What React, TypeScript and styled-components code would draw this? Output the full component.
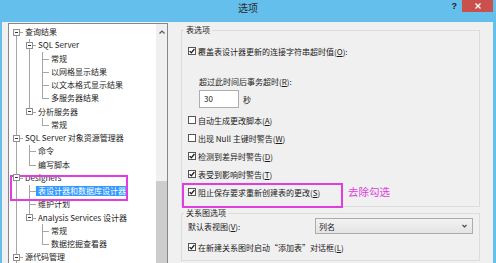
import styled, { createGlobalStyle } from 'styled-components';

const ROW = 13.25;
const TREE_LINE = '#a6a6a6';
const MAGENTA = '#e03ce0';

const GlobalStyle = createGlobalStyle`
  html, body {
    margin: 0;
    padding: 0;
    overflow: hidden;
  }
  body {
    font-family: "Noto Sans CJK SC", "Noto Sans", sans-serif;
  }
`;

const Window = styled.div`
  width: 496px;
  height: 263px;
  background: #64bfec;
  display: flex;
  flex-direction: column;
  overflow: hidden;
  font-family: "Noto Sans CJK SC", "Noto Sans", sans-serif;
  font-size: 8px;
  color: #1b1b1b;
`;

const TitleBar = styled.div`
  flex: none;
  height: 22px;
  display: grid;
  grid-template-columns: 1fr auto 1fr;
`;

const Title = styled.div`
  grid-column: 2;
  padding-top: 2px;
  font-size: 10px;
  line-height: 11px;
  color: #2b2b2b;
`;

const Controls = styled.div`
  justify-self: end;
  display: flex;
  align-items: flex-start;
  margin-right: 3px;
`;

const HelpButton = styled.div`
  font-family: "Liberation Sans", sans-serif;
  font-weight: 700;
  font-size: 9px;
  line-height: 10px;
  padding-top: 1px;
  margin-right: 5px;
  color: #202020;
`;

const CloseButton = styled.div`
  width: 31px;
  height: 12px;
  background: #c9504c;
  display: flex;
  align-items: center;
  justify-content: center;
`;

const Body = styled.div`
  flex: 1;
  min-height: 0;
  margin: 0 3px 0 2px;
  background: #f0f0f0;
  display: flex;
`;

/* left tree */
const TreePane = styled.div`
  position: relative;
  flex: none;
  width: 158px;
  margin: 1px 0 0 6px;
  border: 1px solid #828790;
  border-bottom: none;
  background: #fff;
  display: flex;
`;

const TreeContent = styled.div`
  flex: 1;
  min-width: 0;
  padding-top: 1.5px;
  overflow: hidden;
`;

const TreeList = styled.ul<{ $nested?: boolean }>`
  list-style: none;
  margin: 0;
  padding: 0 0 0 ${(p) => (p.$nested ? 13 : 0)}px;
`;

const TreeItem = styled.li<{ $first?: boolean; $last?: boolean }>`
  position: relative;
  &::before {
    content: '';
    position: absolute;
    left: 7px;
    top: ${(p) => (p.$first ? ROW / 2 : 0)}px;
    ${(p) => (p.$last ? `height: ${ROW / 2}px;` : 'bottom: 0;')}
    border-left: 1px solid ${TREE_LINE};
  }
`;

const TreeRow = styled.div`
  height: ${ROW}px;
  display: flex;
  align-items: center;
  white-space: nowrap;
`;

const Gutter = styled.span`
  position: relative;
  flex: none;
  width: 14px;
  height: 100%;
  display: flex;
  align-items: center;
  &::after {
    content: '';
    position: absolute;
    left: 7px;
    right: 0;
    top: 50%;
    border-top: 1px solid ${TREE_LINE};
  }
`;

const Expander = styled.span`
  position: relative;
  z-index: 1;
  box-sizing: border-box;
  width: 7px;
  height: 7px;
  margin-left: 4px;
  border: 1px solid #8e8f8f;
  background: #fff;
  display: flex;
  align-items: center;
  justify-content: center;
  &::before {
    content: '';
    width: 3px;
    height: 1px;
    background: #333;
  }
`;

const NodeLabel = styled.span<{ $selected?: boolean }>`
  padding: 0 2px;
  line-height: 10px;
  height: 10px;
  background: ${(p) => (p.$selected ? '#3399ff' : 'transparent')};
  color: ${(p) => (p.$selected ? '#fff' : 'inherit')};
`;

const ScrollBar = styled.div`
  flex: none;
  width: 11px;
  background: #f0f0f0;
  display: flex;
  flex-direction: column;
`;

const ScrollArrow = styled.div`
  height: 16px;
  display: flex;
  align-items: center;
  justify-content: center;
`;

const ScrollThumb = styled.div`
  flex: 1;
  margin-top: 141px;
  background: #cdcdcd;
`;

const TreeMark = styled.div`
  position: absolute;
  left: 1px;
  top: 151px;
  width: 118px;
  height: 26px;
  box-sizing: border-box;
  border: 2px solid ${MAGENTA};
  pointer-events: none;
`;

/* right options */
const OptionsPane = styled.div`
  flex: 1;
  min-width: 0;
  padding: 3px 13px 0 13px;
  display: flex;
  flex-direction: column;
`;

const Group = styled.fieldset<{ $mt?: number }>`
  margin: ${(p) => p.$mt ?? 0}px 0 0 0;
  padding: 0;
  min-width: 0;
  border: 1px solid #dcdcdc;
`;

const GroupTitle = styled.legend`
  margin-left: 2px;
  padding: 0 2px;
  font-size: 8px;
  line-height: 10px;
`;

const GroupBody = styled.div<{ $pt: number; $pb: number }>`
  display: flex;
  flex-direction: column;
  padding: ${(p) => p.$pt}px 6px ${(p) => p.$pb}px 6px;
`;

const CheckRow = styled.div<{ $mt?: number }>`
  position: relative;
  height: 18px;
  margin-top: ${(p) => p.$mt ?? 0}px;
  display: flex;
  align-items: center;
  gap: 2px;
  white-space: nowrap;
`;

const Box = styled.span`
  flex: none;
  box-sizing: border-box;
  width: 8px;
  height: 8px;
  border: 1px solid #555;
  background: #fff;
  display: flex;
  align-items: center;
  justify-content: center;
`;

const Indented = styled.div`
  margin: 12px 0 0 11px;
  display: flex;
  flex-direction: column;
`;

const FieldLabel = styled.div`
  height: 18px;
  display: flex;
  align-items: center;
  white-space: nowrap;
`;

const InputRow = styled.div`
  display: flex;
  align-items: center;
  gap: 4px;
`;

const TextBox = styled.div`
  box-sizing: border-box;
  width: 40px;
  height: 18px;
  border: 1px solid #abadb3;
  background: #fff;
  padding-left: 4px;
  line-height: 16px;
`;

const ComboRow = styled.div`
  height: 16px;
  display: flex;
  align-items: center;
  justify-content: space-between;
  white-space: nowrap;
`;

const Combo = styled.div`
  box-sizing: border-box;
  width: 158px;
  height: 16px;
  border: 1px solid #acacac;
  background: linear-gradient(#f2f2f2, #e4e4e4);
  display: flex;
  align-items: center;
  justify-content: space-between;
  padding: 0 5px 0 3px;
`;

const Frame = styled.div`
  position: absolute;
  left: -6px;
  top: 0;
  width: 161px;
  height: 25px;
  box-sizing: border-box;
  border: 2px solid ${MAGENTA};
  pointer-events: none;
`;

const Note = styled.div`
  position: absolute;
  left: 160px;
  top: 2px;
  font-size: 10.5px;
  line-height: 13px;
  color: ${MAGENTA};
  white-space: nowrap;
`;

type TreeNode = { label: string; selected?: boolean; children?: TreeNode[] };

const tree: TreeNode[] = [
  {
    label: '查询结果',
    children: [
      {
        label: 'SQL Server',
        children: [
          { label: '常规' },
          { label: '以网格显示结果' },
          { label: '以文本格式显示结果' },
          { label: '多服务器结果' },
        ],
      },
      { label: '分析服务器', children: [{ label: '常规' }] },
    ],
  },
  {
    label: 'SQL Server 对象资源管理器',
    children: [{ label: '命令' }, { label: '编写脚本' }],
  },
  {
    label: 'Designers',
    children: [
      { label: '表设计器和数据库设计器', selected: true },
      { label: '维护计划' },
      {
        label: 'Analysis Services 设计器',
        children: [{ label: '常规' }, { label: '数据挖掘查看器' }],
      },
    ],
  },
  { label: '源代码管理', children: [] },
];

function Branch({ nodes, root }: { nodes: TreeNode[]; root?: boolean }) {
  return (
    <TreeList $nested={!root}>
      {nodes.map((n, i) => (
        <TreeItem
          key={n.label + i}
          $first={root && i === 0}
          $last={!root && i === nodes.length - 1}
        >
          <TreeRow>
            <Gutter>{n.children && <Expander />}</Gutter>
            <NodeLabel $selected={n.selected}>{n.label}</NodeLabel>
          </TreeRow>
          {n.children && n.children.length > 0 && <Branch nodes={n.children} />}
        </TreeItem>
      ))}
    </TreeList>
  );
}

function Check({ checked }: { checked?: boolean }) {
  return (
    <Box>
      {checked && (
        <svg width="6" height="6" viewBox="0 0 6 6">
          <path d="M0.6 3.1 L2.3 4.8 L5.4 1" fill="none" stroke="#1a1a1a" strokeWidth="1.3" />
        </svg>
      )}
    </Box>
  );
}

export default function App() {
  return (
    <Window>
      <GlobalStyle />
      <TitleBar>
        <Title>选项</Title>
        <Controls>
          <HelpButton>?</HelpButton>
          <CloseButton>
            <svg width="6" height="6" viewBox="0 0 6 6">
              <path d="M0.5 0.5 L5.5 5.5 M5.5 0.5 L0.5 5.5" stroke="#fff" strokeWidth="1.3" />
            </svg>
          </CloseButton>
        </Controls>
      </TitleBar>
      <Body>
        {/* tree */}
        <TreePane>
          <TreeContent>
            <Branch nodes={tree} root />
          </TreeContent>
          <ScrollBar>
            <ScrollArrow>
              <svg width="6" height="4" viewBox="0 0 6 4">
                <path d="M0.5 3.5 L3 1 L5.5 3.5" fill="none" stroke="#555" strokeWidth="1.2" />
              </svg>
            </ScrollArrow>
            <ScrollThumb />
          </ScrollBar>
          <TreeMark />
        </TreePane>
        {/* options */}
        <OptionsPane>
          <Group>
            <GroupTitle>表选项</GroupTitle>
            <GroupBody $pt={7} $pb={5}>
              <CheckRow>
                <Check checked />
                <span>
                  覆盖表设计器更新的连接字符串超时值(<u>O</u>):
                </span>
              </CheckRow>
              <Indented>
                <FieldLabel>
                  超过此时间后事务超时(<u>R</u>):
                </FieldLabel>
                <InputRow>
                  <TextBox>30</TextBox>
                  <span>秒</span>
                </InputRow>
              </Indented>
              <CheckRow $mt={3}>
                <Check />
                <span>
                  自动生成更改脚本(<u>A</u>)
                </span>
              </CheckRow>
              <CheckRow>
                <Check />
                <span>
                  出现 Null 主键时警告(<u>W</u>)
                </span>
              </CheckRow>
              <CheckRow>
                <Check checked />
                <span>
                  检测到差异时警告(<u>D</u>)
                </span>
              </CheckRow>
              <CheckRow>
                <Check checked />
                <span>
                  表受到影响时警告(<u>T</u>)
                </span>
              </CheckRow>
              <CheckRow>
                <Check checked />
                <span>
                  阻止保存要求重新创建表的更改(<u>S</u>)
                </span>
                <Frame />
                <Note>去除勾选</Note>
              </CheckRow>
            </GroupBody>
          </Group>
          <Group $mt={1}>
            <GroupTitle>关系图选项</GroupTitle>
            <GroupBody $pt={0} $pb={4}>
              <ComboRow>
                <span>
                  默认表视图(<u>V</u>):
                </span>
                <Combo>
                  <span>列名</span>
                  <svg width="5" height="4" viewBox="0 0 5 4">
                    <path d="M0.5 1 L2.5 3 L4.5 1" fill="none" stroke="#444" strokeWidth="1.1" />
                  </svg>
                </Combo>
              </ComboRow>
              <CheckRow $mt={4}>
                <Check checked />
                <span>
                  在新建关系图时启动“添加表”对话框(<u>L</u>)
                </span>
              </CheckRow>
            </GroupBody>
          </Group>
        </OptionsPane>
      </Body>
    </Window>
  );
}
